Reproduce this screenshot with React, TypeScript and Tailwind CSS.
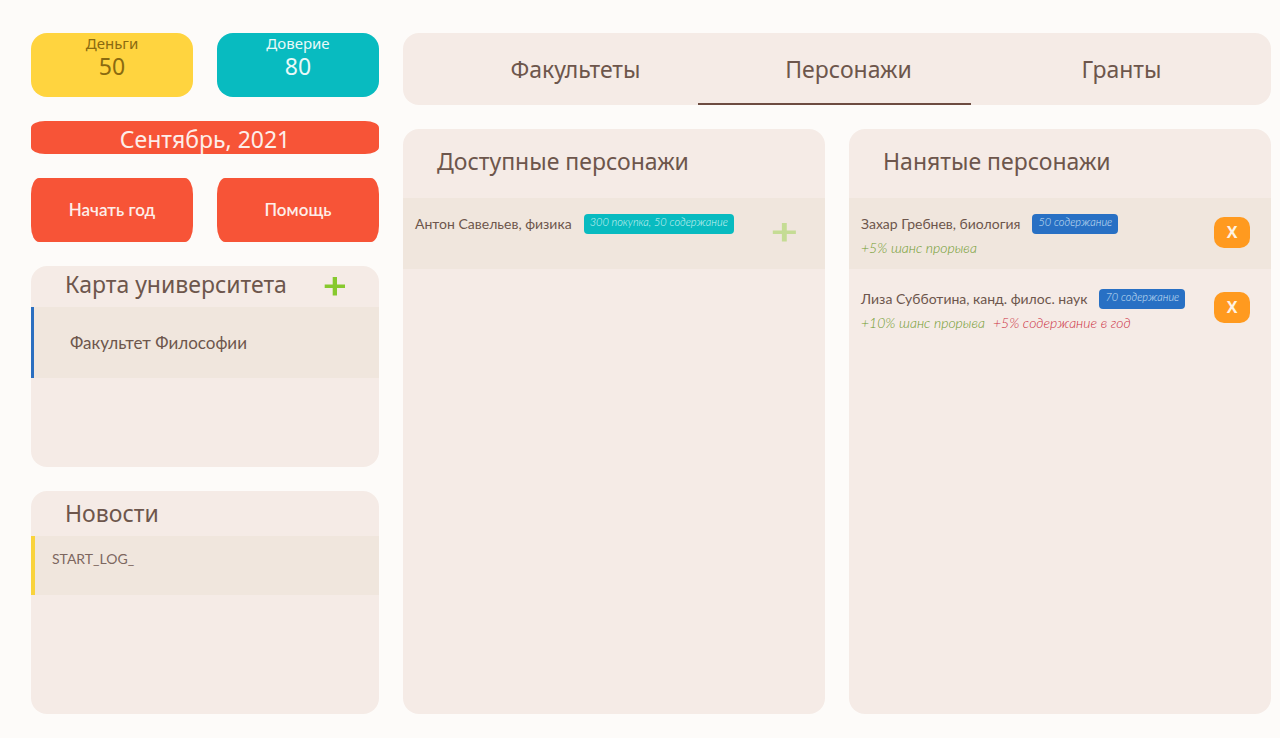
import type { ReactNode } from 'react';

type Effect = { text: string; good: boolean };
type Character = { name: string; cost: string; effects: Effect[] };

const available: Character[] = [
  { name: 'Антон Савельев, физика', cost: '300 покупка, 50 содержание', effects: [] },
];

const hired: Character[] = [
  {
    name: 'Захар Гребнев, биология',
    cost: '50 содержание',
    effects: [{ text: '+5% шанс прорыва', good: true }],
  },
  {
    name: 'Лиза Субботина, канд. филос. наук',
    cost: '70 содержание',
    effects: [
      { text: '+10% шанс прорыва', good: true },
      { text: '+5% содержание в год', good: false },
    ],
  },
];

const tabs = ['Факультеты', 'Персонажи', 'Гранты'];

function Plus({ className }: { className: string }) {
  return (
    <svg
      viewBox="0 0 22 20"
      preserveAspectRatio="none"
      className={className}
      fill="currentColor"
      aria-hidden="true"
    >
      <path d="M8.700 1h4.300v7.500h8v3.500h-8v7.500h-4.300v-7.500h-8v-3.500h8z" />
    </svg>
  );
}

function CharacterRow({
  character,
  shaded,
  tagClass,
  action,
}: {
  character: Character;
  shaded: boolean;
  tagClass: string;
  action: ReactNode;
}) {
  return (
    <li
      className={`flex min-h-[71px] items-start justify-between pt-4 pl-3 ${shaded ? 'bg-[#f0e6dd]' : ''}`}
    >
      <div>
        <div className="flex h-5 items-center gap-3">
          <span className="text-[14px] leading-5">{character.name}</span>
          <span
            className={`h-5 rounded-[4px] px-[6px] font-['Lato',sans-serif] text-[11px] leading-4 font-light italic ${tagClass}`}
          >
            {character.cost}
          </span>
        </div>
        <div className="mt-0.5 flex gap-2 font-['Lato',sans-serif] text-[14px] leading-6 font-light italic">
          {character.effects.map((effect) => (
            <span key={effect.text} className={effect.good ? 'text-[#6f9a2c]' : 'text-[#cc2f3f]'}>
              {effect.text}
            </span>
          ))}
        </div>
      </div>
      {action}
    </li>
  );
}

function Heading({ children }: { children: ReactNode }) {
  return <h2 className="font-['Noto_Sans',sans-serif] text-[23px] leading-8">{children}</h2>;
}

export default function App() {
  return (
    <div className="flex min-h-screen gap-6 bg-[#fdfbf9] pt-[33px] pr-[9px] pb-6 pl-[31px] font-['Lato',sans-serif] text-[#6d564c]">
      <aside className="flex w-[348px] shrink-0 flex-col gap-6">
        <div className="grid grid-cols-2 gap-6 text-center font-['Noto_Sans',sans-serif]">
          <div className="h-16 rounded-2xl bg-[#ffd43f] text-[#8a6a10]">
            <div className="text-[15px] leading-5">Деньги</div>
            <div className="text-[23px] leading-[26px]">50</div>
          </div>
          <div className="h-16 rounded-2xl bg-[#08bbc0] text-[#e9f9f8]">
            <div className="text-[15px] leading-5">Доверие</div>
            <div className="text-[23px] leading-[26px]">80</div>
          </div>
        </div>
        <div className="flex h-[33px] items-center justify-center rounded-[14px/7px] bg-[#f75437] pt-0.5 font-['Noto_Sans',sans-serif] text-[23px] leading-8 text-[#fdeee9]">
          Сентябрь, 2021
        </div>
        <div className="grid grid-cols-2 gap-6 text-[17px] font-semibold text-[#fdeee9]">
          <button type="button" className="h-16 rounded-[8px/16px] bg-[#f75437]">
            Начать год
          </button>
          <button type="button" className="h-16 rounded-[8px/16px] bg-[#f75437]">
            Помощь
          </button>
        </div>

        <section className="h-[201px] rounded-2xl bg-[#f5ebe6]">
          <div className="flex h-[41px] items-start justify-between pt-0.5 pr-[33px] pl-[34px]">
            <Heading>Карта университета</Heading>
            <button type="button" aria-label="Добавить факультет" className="mt-2 text-[#87c92e]">
              <Plus className="h-5 w-[22px]" />
            </button>
          </div>
          <div className="flex h-[71px] items-center border-l-[3px] border-[#2b6fc0] bg-[#f0e6dd] pl-9 text-[17px]">
            Факультет Философии
          </div>
        </section>

        <section className="min-h-[223px] grow rounded-2xl bg-[#f5ebe6]">
          <div className="h-[45px] pt-1.5 pl-[34px]">
            <Heading>Новости</Heading>
          </div>
          <div className="h-[59px] border-l-4 border-[#f9d33c] bg-[#f0e6dd] pt-[13px] pl-[17px] text-[14px] leading-5 text-[#7d675f]">
            START_LOG_
          </div>
        </section>
      </aside>

      <main className="flex min-w-0 grow flex-col gap-6">
        <nav className="flex h-[72px] rounded-2xl bg-[#f5ebe6] pr-[27px] pl-[22px]">
          {tabs.map((tab) => (
            <a
              key={tab}
              href="#"
              className={`flex flex-1 items-center justify-center border-b-2 pt-0.5 pl-7 font-['Noto_Sans',sans-serif] text-[23px] leading-8 ${
                tab === 'Персонажи' ? 'border-[#6d4c41]' : 'border-transparent'
              }`}
            >
              {tab}
            </a>
          ))}
        </nav>

        <div className="grid grow grid-cols-2 gap-6">
          <section className="rounded-2xl bg-[#f5ebe6]">
            <div className="h-[69px] pt-4 pl-[34px]">
              <Heading>Доступные персонажи</Heading>
            </div>
            <ul className="flex flex-col gap-1">
              {available.map((character) => (
                <CharacterRow
                  key={character.name}
                  character={character}
                  shaded
                  tagClass="bg-[#08bbc0] text-[#d3f3f2]"
                  action={
                    <button type="button" aria-label="Нанять" className="mt-2 mr-7 text-[#c5dc94]">
                      <Plus className="h-5 w-[25px]" />
                    </button>
                  }
                />
              ))}
            </ul>
          </section>

          <section className="rounded-2xl bg-[#f5ebe6]">
            <div className="h-[69px] pt-4 pl-[34px]">
              <Heading>Нанятые персонажи</Heading>
            </div>
            <ul className="flex flex-col gap-1">
              {hired.map((character, index) => (
                <CharacterRow
                  key={character.name}
                  character={character}
                  shaded={index % 2 === 0}
                  tagClass="bg-[#2870c4] text-[#cfe0f4]"
                  action={
                    <button
                      type="button"
                      aria-label="Уволить"
                      className="mt-[3px] mr-[21px] h-[31px] w-9 rounded-[10px] bg-[#ff9a1f] font-['Open_Sans',sans-serif] text-[16px] leading-[31px] font-bold text-[#fdf3e4]"
                    >
                      X
                    </button>
                  }
                />
              ))}
            </ul>
          </section>
        </div>
      </main>
    </div>
  );
}
